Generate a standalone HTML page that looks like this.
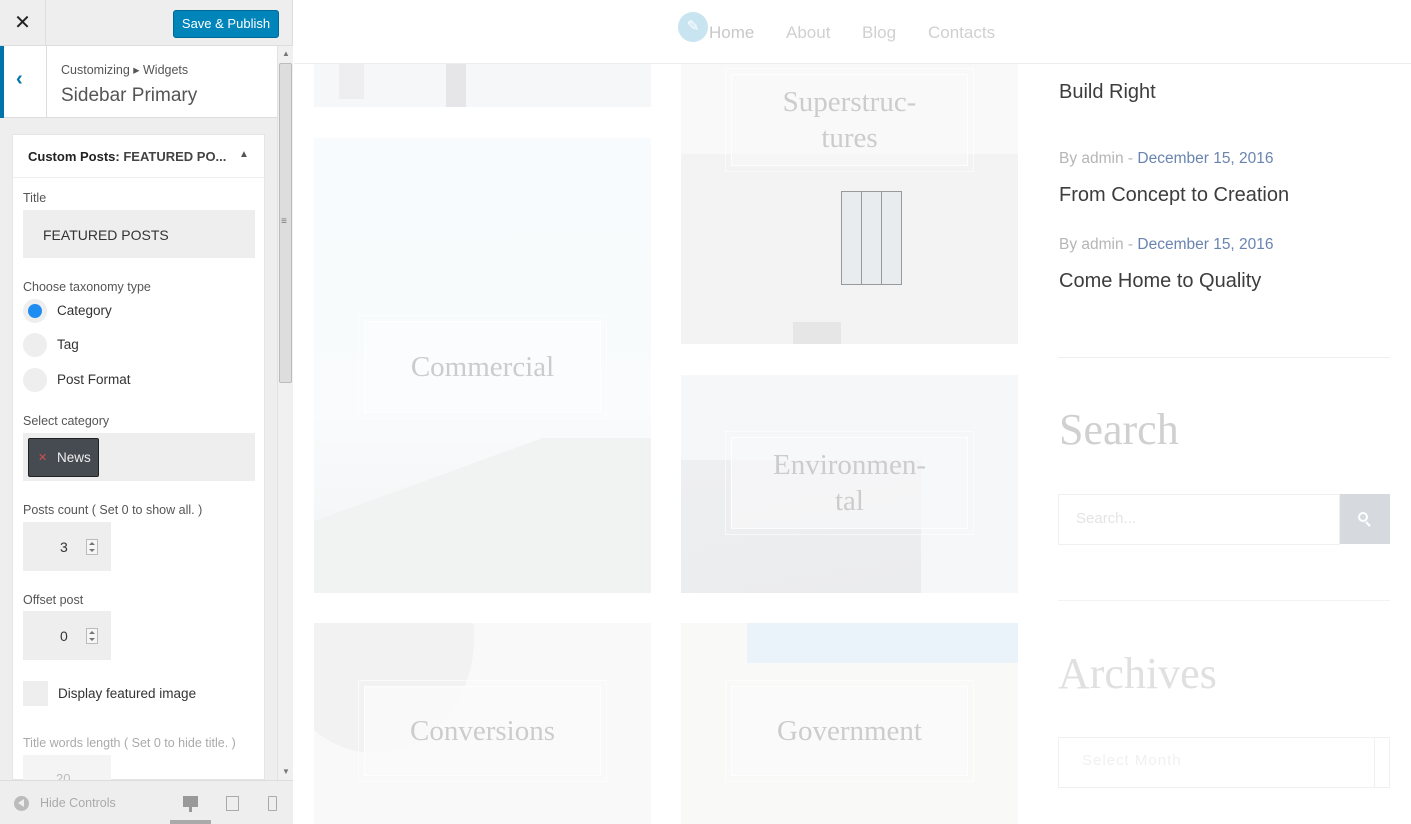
<!DOCTYPE html>
<html><head><meta charset="utf-8"><style>
*{box-sizing:border-box;margin:0;padding:0}
body{width:1411px;height:824px;overflow:hidden;position:relative;background:#fff;font-family:"Liberation Sans",sans-serif}
.a{position:absolute}
#side{left:0;top:0;width:293px;height:824px;background:#eee;border-right:1px solid #ddd}
.lbl{position:absolute;left:23px;font-size:12.5px;color:#555}
.inp{position:absolute;background:#eee}
.serif{font-family:"Liberation Serif",serif}
.tile{position:absolute;overflow:hidden}
.ttl{position:absolute;font-family:"Liberation Serif",serif;color:#ccc;font-size:29px;text-align:center;border:1px solid rgba(255,255,255,.8);outline:1px solid rgba(255,255,255,.6);outline-offset:5px;background:rgba(255,255,255,.35);display:flex;align-items:center;justify-content:center;line-height:36px}
.spin{position:absolute;width:12px;height:16px;border:1px solid #bbb;background:#f6f6f6}
.spin:before{content:"";position:absolute;left:2px;top:2px;border:3px solid transparent;border-bottom:3px solid #777;border-top:0}
.spin:after{content:"";position:absolute;left:2px;top:9px;border:3px solid transparent;border-top:3px solid #777;border-bottom:0}
</style></head><body>
<div id="side" class="a">
  <div class="a" style="left:0;top:0;width:46px;height:46px;border-right:1px solid #ddd;border-bottom:1px solid #ddd;font-size:20px;color:#222;text-align:center;line-height:46px">✕</div>
  <div class="a" style="left:46px;top:45px;width:247px;height:1px;background:#ddd"></div>
  <div class="a" style="left:173px;top:10px;width:106px;height:28px;background:#0085ba;border:1px solid #006799;border-radius:3px;color:#fff;font-size:13px;text-align:center;line-height:26px">Save &amp; Publish</div>
  <div class="a" style="left:0;top:46px;width:277px;height:72px;background:#fff;border-bottom:1px solid #ddd"></div>
  <div class="a" style="left:0;top:46px;width:4px;height:72px;background:#0073aa"></div>
  <div class="a" style="left:46px;top:46px;width:1px;height:72px;background:#ddd"></div>
  <div class="a" style="left:16px;top:68px;color:#0073aa;font-size:20px;font-weight:bold">‹</div>
  <div class="a" style="left:61px;top:62px;font-size:12.5px;color:#555">Customizing ▸ Widgets</div>
  <div class="a" style="left:61px;top:85px;font-size:19px;color:#555">Sidebar Primary</div>
  <div class="a" style="left:277px;top:46px;width:16px;height:734px;background:#f0f0f0;border-left:1px solid #e2e2e2"></div>
  <div class="a" style="left:279px;top:63px;width:13px;height:320px;background:#ddd;border:1px solid #bbb;border-radius:2px"></div>
  <div class="a" style="left:282px;top:49px;font-size:8px;color:#777">▲</div>
  <div class="a" style="left:282px;top:767px;font-size:8px;color:#777">▼</div>
  <div class="a" style="left:281px;top:216px;font-size:10px;color:#777">≡</div>
  <div class="a" style="left:12px;top:134px;width:253px;height:646px;background:#fff;border:1px solid #e5e5e5"></div>
  <div class="a" style="left:12px;top:177px;width:253px;height:1px;background:#eee"></div>
  <div class="a" style="left:28px;top:149px;font-size:13px;color:#222;font-weight:bold">Custom Posts: <span style="color:#444">FEATURED PO...</span></div>
  <div class="a" style="left:239px;top:149px;font-size:10px;color:#555">▲</div>
  <div class="lbl" style="top:191px">Title</div>
  <div class="inp" style="left:23px;top:210px;width:232px;height:48px"></div>
  <div class="a" style="left:43px;top:227px;font-size:14px;color:#333">FEATURED POSTS</div>
  <div class="lbl" style="top:280px">Choose taxonomy type</div>
  <div class="a" style="left:23px;top:299px;width:24px;height:24px;border-radius:50%;background:#eee"></div>
  <div class="a" style="left:28px;top:304px;width:14px;height:14px;border-radius:50%;background:#1e8cf0"></div>
  <div class="a" style="left:57px;top:303px;font-size:13.5px;color:#333">Category</div>
  <div class="a" style="left:23px;top:333px;width:24px;height:24px;border-radius:50%;background:#eee"></div>
  <div class="a" style="left:57px;top:337px;font-size:13.5px;color:#333">Tag</div>
  <div class="a" style="left:23px;top:368px;width:24px;height:24px;border-radius:50%;background:#eee"></div>
  <div class="a" style="left:57px;top:372px;font-size:13.5px;color:#333">Post Format</div>
  <div class="lbl" style="top:414px">Select category</div>
  <div class="inp" style="left:23px;top:433px;width:232px;height:48px"></div>
  <div class="a" style="left:28px;top:438px;width:71px;height:39px;background:#464b52;border:1px solid #222;border-radius:2px"></div>
  <div class="a" style="left:38px;top:451px;font-size:11px;color:#d54e4e">✕</div>
  <div class="a" style="left:57px;top:450px;font-size:13.5px;color:#eee">News</div>
  <div class="lbl" style="top:503px">Posts count ( Set 0 to show all. )</div>
  <div class="inp" style="left:23px;top:522px;width:88px;height:49px"></div>
  <div class="a" style="left:60px;top:539px;font-size:14px;color:#333">3</div>
  <div class="spin" style="left:86px;top:539px"></div>
  <div class="lbl" style="top:593px">Offset post</div>
  <div class="inp" style="left:23px;top:611px;width:88px;height:49px"></div>
  <div class="a" style="left:60px;top:628px;font-size:14px;color:#333">0</div>
  <div class="spin" style="left:86px;top:628px"></div>
  <div class="inp" style="left:23px;top:681px;width:25px;height:25px"></div>
  <div class="a" style="left:58px;top:686px;font-size:13.5px;color:#333">Display featured image</div>
  <div class="lbl" style="top:736px;color:#aaa">Title words length ( Set 0 to hide title. )</div>
  <div class="inp" style="left:23px;top:755px;width:88px;height:25px;background:#f4f4f4"></div>
  <div class="a" style="left:56px;top:771px;font-size:13px;color:#bbb;height:9px;overflow:hidden">20</div>
  <div class="a" style="left:0;top:780px;width:293px;height:44px;background:#eee;border-top:1px solid #ddd"></div>
  <div class="a" style="left:14px;top:796px;width:15px;height:15px;border-radius:50%;background:#bbb"></div>
  <div class="a" style="left:18px;top:799px;border:4px solid transparent;border-right:6px solid #eee;border-left:0;width:0;height:0"></div>
  <div class="a" style="left:40px;top:796px;font-size:12.5px;color:#aaa">Hide Controls</div>
  <div class="a" style="left:183px;top:796px;width:15px;height:11px;border:2px solid #999;background:#999"></div>
  <div class="a" style="left:189px;top:807px;width:3px;height:5px;background:#999"></div>
  <div class="a" style="left:170px;top:820px;width:41px;height:4px;background:#aaa"></div>
  <div class="a" style="left:226px;top:796px;width:13px;height:15px;border:1.5px solid #aaa"></div>
  <div class="a" style="left:268px;top:796px;width:9px;height:15px;border:1.5px solid #aaa;border-radius:1px"></div>
</div>

<div class="a" style="left:294px;top:0;width:1117px;height:824px;background:#fff"></div>
<div class="a" style="left:314px;top:0;width:698px;height:2px;background:#e4e4e4"></div>
<div class="a" style="left:1062px;top:0;width:349px;height:1px;background:#e2eef6"></div>
<!-- col1 -->
<div class="tile" style="left:314px;top:64px;width:337px;height:43px;background:#f6f7f9"><div class="a" style="left:132px;top:0;width:20px;height:43px;background:#e6e6e8"></div><div class="a" style="left:25px;top:0;width:25px;height:35px;background:#eeeef0"></div></div>
<div class="tile" style="left:314px;top:138px;width:337px;height:455px;background:linear-gradient(#f7fbfd,#f9fbfc 60%,#f2f3f4)">
  <div class="a" style="left:0;top:300px;width:337px;height:155px;background:linear-gradient(160deg,transparent 30%,#f1f2f2 30%)"></div>
  <div class="ttl" style="left:50px;top:183px;width:237px;height:92px">Commercial</div>
</div>
<div class="tile" style="left:314px;top:623px;width:337px;height:201px;background:#f9f9f9">
  <div class="a" style="left:-40px;top:-100px;width:200px;height:230px;border-radius:50%;background:#f2f2f2"></div>
  <div class="ttl" style="left:50px;top:63px;width:237px;height:90px;background:rgba(250,250,250,.8)">Conversions</div>
</div>
<!-- col2 -->
<div class="tile" style="left:681px;top:64px;width:337px;height:280px;background:#f3f3f3">
  <div class="a" style="left:0;top:0;width:337px;height:90px;background:#f9f9f9"></div>
  <div class="a" style="left:160px;top:127px;width:61px;height:94px;background:#e8ecee;border:1px solid #999"></div>
  <div class="a" style="left:180px;top:128px;width:1px;height:92px;background:#999"></div>
  <div class="a" style="left:200px;top:128px;width:1px;height:92px;background:#999"></div>
  <div class="a" style="left:112px;top:258px;width:48px;height:22px;background:#e6e6e6"></div>
  <div class="ttl" style="left:50px;top:10px;width:237px;height:92px;background:rgba(248,248,248,.6)">Superstruc-<br>tures</div>
</div>
<div class="tile" style="left:681px;top:375px;width:337px;height:218px;background:#f6f7f9">
  <div class="a" style="left:0;top:85px;width:240px;height:133px;background:linear-gradient(170deg,#eeeff1,#ebeced)"></div>
  <div class="ttl" style="left:50px;top:62px;width:237px;height:92px;background:rgba(248,248,250,.7)">Environmen-<br>tal</div>
</div>
<div class="tile" style="left:681px;top:623px;width:337px;height:201px;background:#f9f9f8">
  <div class="a" style="left:66px;top:0;width:271px;height:40px;background:#eaf3f9"></div>
  <div class="ttl" style="left:50px;top:63px;width:237px;height:90px;background:rgba(250,250,250,.8)">Government</div>
</div>
<!-- header -->
<div class="a" style="left:294px;top:0;width:1117px;height:64px;background:rgba(255,255,255,.97);border-bottom:1px solid #eee"></div>
<div class="a" style="left:678px;top:12px;width:30px;height:30px;border-radius:50%;background:#c9e4f1;color:#fff;font-size:15px;text-align:center;line-height:30px">✎</div>
<div class="a" style="left:709px;top:23px;font-size:17px;color:#c8c8c8">Home</div>
<div class="a" style="left:786px;top:23px;font-size:17px;color:#d0d0d0">About</div>
<div class="a" style="left:862px;top:23px;font-size:17px;color:#d0d0d0">Blog</div>
<div class="a" style="left:928px;top:23px;font-size:17px;color:#d0d0d0">Contacts</div>
<!-- sidebar -->
<div class="a" style="left:1059px;top:81px;font-size:20px;color:#3d3d3d">Build Right</div>
<div class="a" style="left:1059px;top:150px;font-size:15.5px;color:#b5b5b5">By admin - <span style="color:#6a84b0">December 15, 2016</span></div>
<div class="a" style="left:1059px;top:184px;font-size:20px;color:#3d3d3d">From Concept to Creation</div>
<div class="a" style="left:1059px;top:236px;font-size:15.5px;color:#b5b5b5">By admin - <span style="color:#6a84b0">December 15, 2016</span></div>
<div class="a" style="left:1059px;top:270px;font-size:20px;color:#3d3d3d">Come Home to Quality</div>
<div class="a" style="left:1058px;top:357px;width:332px;height:1px;background:#eee"></div>
<div class="a serif" style="left:1059px;top:404px;font-size:44px;color:#d0d0d0">Search</div>
<div class="a" style="left:1058px;top:494px;width:282px;height:51px;border:1px solid #f0f0f0"></div>
<div class="a" style="left:1076px;top:510px;font-size:15px;color:#e4e4e4">Search...</div>
<div class="a" style="left:1340px;top:494px;width:50px;height:50px;background:#d6d9dd"></div>
<div class="a" style="left:1358px;top:512px;width:10px;height:10px;border:2px solid #fff;border-radius:50%"></div>
<div class="a" style="left:1367px;top:521px;width:2px;height:6px;background:#fff;transform:rotate(-45deg)"></div>
<div class="a" style="left:1058px;top:600px;width:332px;height:1px;background:#f2f2f2"></div>
<div class="a serif" style="left:1058px;top:648px;font-size:44px;color:#e0e0e0">Archives</div>
<div class="a" style="left:1058px;top:737px;width:332px;height:51px;border:1px solid #f0f0f0"></div>
<div class="a" style="left:1374px;top:738px;width:1px;height:49px;background:#f0f0f0"></div>
<div class="a" style="left:1082px;top:752px;font-size:15px;color:#f0f0f0;letter-spacing:1px">Select Month</div>
</body></html>
